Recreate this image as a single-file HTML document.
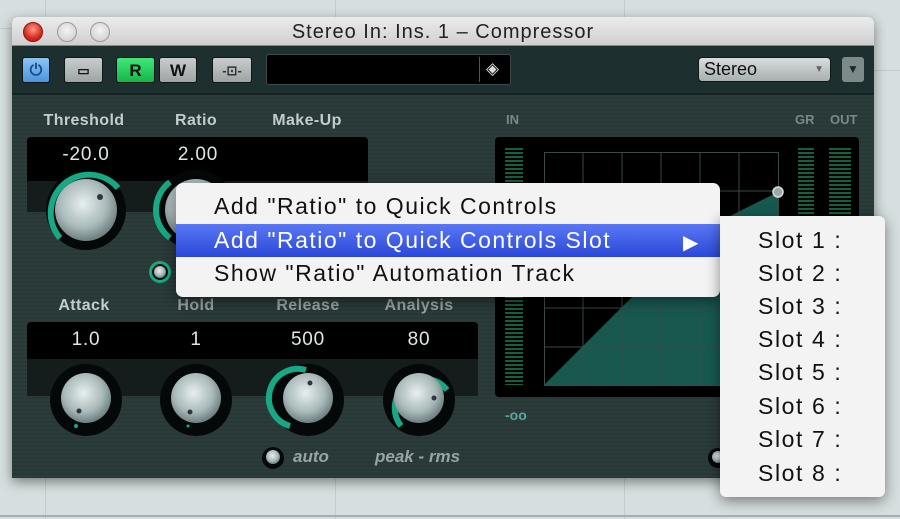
<!DOCTYPE html>
<html><head><meta charset="utf-8"><style>
*{margin:0;padding:0;box-sizing:border-box}
body{width:900px;height:519px;overflow:hidden;position:relative;background:#d6dfdf;font-family:"Liberation Sans",sans-serif}
.a{position:absolute}
.gl{position:absolute;background:#c3cccc}
.win{left:12px;top:17px;width:862px;height:461px;background:#263534;box-shadow:0 4px 12px rgba(0,0,0,.45);border-radius:5px 5px 0 0;overflow:hidden}
.title{left:0;top:0;width:862px;height:29px;background:linear-gradient(#ececec,#cfcfcf);border-bottom:1px solid #888;text-align:center;font-size:20px;letter-spacing:1px;line-height:31px;color:#222}
.tl{width:20px;height:20px;border-radius:50%;top:5px;background:radial-gradient(circle at 50% 40%,#f4f4f4,#c8c8c8);border:1px solid #9a9a9a}
.tb{left:0;top:29px;width:862px;height:49px;background:#1d302f;border-bottom:2px solid #142221}
.btn{height:26px;top:11px;border-radius:3px;background:linear-gradient(#c8cccc,#9ea4a4);border:1px solid #0d1818;text-align:center;font-weight:bold;font-size:17px;line-height:25px;color:#111}
.body{left:0;top:78px;width:862px;height:383px;background:repeating-linear-gradient(#2c3c3b 0 2px,#283837 2px 4px)}
.lab{font-weight:bold;font-size:16px;letter-spacing:.4px;color:#c4cccc;transform:translateX(-50%);top:0}
.val{font-size:19px;letter-spacing:.8px;transform:translateX(-50%);color:#dfe6e6}
.mi{position:absolute;left:38px;font-size:23px;letter-spacing:1.5px;color:#111;white-space:nowrap}
.si{position:absolute;left:38px;font-size:23px;letter-spacing:1.6px;color:#111;white-space:nowrap}
</style></head><body>
<div class="gl" style="left:45px;top:0;width:1px;height:519px"></div>
<div class="gl" style="left:335px;top:0;width:1px;height:519px"></div>
<div class="gl" style="left:624px;top:0;width:1px;height:519px"></div>
<div class="gl" style="left:0;top:28px;width:12px;height:1px"></div>
<div class="gl" style="left:874px;top:70px;width:26px;height:1px"></div>
<div class="gl" style="left:0;top:515px;width:900px;height:2px;background:#aab"></div>

<div class="a win">
 <div class="a title">Stereo In: Ins. 1 – Compressor</div>
 <div class="a tl" style="left:11px;background:radial-gradient(circle at 50% 35%,#ff9a8a,#d8281c 60%,#a01810);border-color:#8a1a12"></div>
 <div class="a tl" style="left:45px"></div>
 <div class="a tl" style="left:78px"></div>
 <div class="a tb">
  <div class="a btn" style="left:10px;width:28px;background:linear-gradient(#8cc4f4,#4e94dc);color:#1a4a8a;font-size:16px">⏻</div>
  <div class="a btn" style="left:52px;width:39px;font-size:13px">▭</div>
  <div class="a btn" style="left:104px;width:39px;background:linear-gradient(#3ee878,#18b448)">R</div>
  <div class="a btn" style="left:147px;width:38px">W</div>
  <div class="a btn" style="left:200px;width:40px;font-size:13px;color:#333">-⊡-</div>
  <div class="a" style="left:254px;top:8px;width:245px;height:31px;background:#000;border-radius:3px;border:1px solid #3a4a4a"></div>
  <div class="a" style="left:467px;top:11px;width:1px;height:25px;background:#555"></div>
  <div class="a" style="left:474px;top:13px;color:#ddd;font-size:17px">◈</div>
  <div class="a" style="left:686px;top:11px;width:133px;height:25px;border-radius:4px;background:linear-gradient(#d8dcdc,#a8b0b0);border:1px solid #0d1818;font-size:18px;line-height:23px;padding-left:5px;color:#111">Stereo<span style="position:absolute;right:6px;top:0;font-size:10px;color:#666">▼</span></div>
  <div class="a" style="left:830px;top:11px;width:22px;height:25px;border-radius:3px;background:#7d8a8a;color:#1a2a2a;font-size:12px;text-align:center;line-height:25px">▼</div>
 </div>
 <div class="a body">
  <div class="a" style="left:0;top:0;width:862px;height:383px">
   <div class="a lab" style="left:72px;top:17px">Threshold</div>
   <div class="a lab" style="left:184px;top:17px">Ratio</div>
   <div class="a lab" style="left:295px;top:17px">Make-Up</div>
   <div class="a" style="left:15px;top:42px;width:341px;height:75px;background:#000;border-radius:4px"></div>
   <div class="a" style="left:15px;top:86px;width:341px;height:31px;background:#151c1c"></div>
   <div class="a val" style="left:74px;top:49px">-20.0</div>
   <div class="a val" style="left:186px;top:49px">2.00</div>
   <div class="a lab" style="left:72px;top:202px">Attack</div>
   <div class="a lab" style="left:184px;top:202px;color:#9aa4a4">Hold</div>
   <div class="a lab" style="left:296px;top:202px;color:#9aa4a4">Release</div>
   <div class="a lab" style="left:407px;top:202px;color:#9aa4a4">Analysis</div>
   <div class="a" style="left:15px;top:227px;width:451px;height:74px;background:#000;border-radius:4px"></div>
   <div class="a" style="left:15px;top:264px;width:451px;height:37px;background:#151c1c"></div>
   <div class="a val" style="left:74px;top:234px">1.0</div>
   <div class="a val" style="left:184px;top:234px">1</div>
   <div class="a val" style="left:296px;top:234px">500</div>
   <div class="a val" style="left:407px;top:234px">80</div>
   <div class="a" style="left:281px;top:352px;font-size:17px;font-weight:bold;font-style:italic;color:#9aa4a4">auto</div>
   <div class="a" style="left:363px;top:352px;font-size:17px;font-weight:bold;font-style:italic;color:#9aa4a4">peak - rms</div>
   <div class="a" style="left:494px;top:17px;font-size:13px;font-weight:bold;color:#7a8888">IN</div>
   <div class="a" style="left:783px;top:17px;font-size:13px;font-weight:bold;color:#7a8888">GR</div>
   <div class="a" style="left:818px;top:17px;font-size:13px;font-weight:bold;color:#7a8888">OUT</div>
   <div class="a" style="left:493px;top:312px;font-size:14px;font-weight:bold;color:#5aa8a0">-oo</div>
  </div>
 </div>
</div>

<svg class="a" style="left:0;top:0" width="900" height="519">
 <defs>
  <radialGradient id="m" cx="45%" cy="40%" r="65%"><stop offset="0" stop-color="#e8efef"/><stop offset=".6" stop-color="#a8b8b8"/><stop offset="1" stop-color="#5e7070"/></radialGradient>
  <pattern id="met" width="18" height="4" patternUnits="userSpaceOnUse"><rect width="18" height="2" fill="#17603f"/></pattern>
 </defs>
 <rect x="495" y="137" width="364" height="260" rx="4" fill="#000"/>
 <rect x="505" y="147" width="18" height="238" fill="url(#met)"/>
 <rect x="798" y="147" width="16" height="100" fill="url(#met)"/>
 <rect x="829" y="147" width="22" height="100" fill="url(#met)"/>
 <polygon points="544,385 696,233 778,192 778,385" fill="#17594f"/>
 <g stroke="#3a4a48" stroke-width="1" fill="none">
  <rect x="544.5" y="152.5" width="234" height="233"/>
  <path d="M583 152V385M622 152V385M661 152V385M700 152V385M739 152V385M544 191H778M544 230H778M544 269H778M544 308H778M544 347H778"/>
 </g>
 <circle cx="778" cy="192" r="5" fill="#9aa" stroke="#ddd" stroke-width="1.5"/>
 <g>
  <circle cx="86" cy="210" r="40" fill="#050808"/>
  <path d="M60 238 A35 35 0 1 1 118 188" stroke="#17a886" stroke-width="6" fill="none"/>
  <circle cx="86" cy="210" r="31" fill="url(#m)"/>
  <circle cx="100" cy="197" r="3" fill="#334"/>
 </g>
 <g>
  <circle cx="196" cy="210" r="40" fill="#050808"/>
  <path d="M170 238 A35 35 0 0 1 170 182" stroke="#17a886" stroke-width="6" fill="none"/>
  <circle cx="196" cy="210" r="31" fill="url(#m)"/>
 </g>
 <circle cx="160" cy="272" r="11" fill="#17a886"/><circle cx="160" cy="272" r="8" fill="#0a1010"/><circle cx="160" cy="272" r="6" fill="url(#m)"/>
 <g>
  <circle cx="86" cy="400" r="36" fill="#050808"/>
  <circle cx="86" cy="398" r="25" fill="url(#m)"/>
  <circle cx="79" cy="411" r="2.5" fill="#334"/><circle cx="76" cy="426" r="2" fill="#17a886"/>
 </g>
 <g>
  <circle cx="196" cy="400" r="36" fill="#050808"/>
  <circle cx="196" cy="398" r="25" fill="url(#m)"/>
  <circle cx="190" cy="412" r="2.5" fill="#334"/><circle cx="188" cy="426" r="1.5" fill="#17a886"/>
 </g>
 <g>
  <circle cx="308" cy="400" r="36" fill="#050808"/>
  <path d="M290 426 A29 29 0 0 1 306 370" stroke="#17a886" stroke-width="6" fill="none"/>
  <circle cx="308" cy="398" r="25" fill="url(#m)"/>
  <circle cx="310" cy="383" r="2.5" fill="#334"/>
 </g>
 <g>
  <circle cx="419" cy="400" r="36" fill="#050808"/>
  <path d="M401 426 A29 29 0 1 1 447 390" stroke="#17a886" stroke-width="6" fill="none"/>
  <circle cx="419" cy="398" r="25" fill="url(#m)"/>
  <circle cx="434" cy="398" r="2.5" fill="#334"/>
 </g>
 <circle cx="273" cy="458" r="11" fill="#050808"/><circle cx="273" cy="457" r="7" fill="url(#m)"/>
 <circle cx="718" cy="458" r="10" fill="#050808"/><circle cx="718" cy="457" r="6" fill="url(#m)"/>
</svg>

<div class="a" style="left:176px;top:183px;width:544px;height:114px;background:#f3f3f3;border-radius:7px;box-shadow:0 4px 14px rgba(0,0,0,.45)">
 <div class="mi" style="top:10px">Add "Ratio" to Quick Controls</div>
 <div class="a" style="left:0;top:41px;width:544px;height:33px;background:linear-gradient(#5a78f4,#2a48d8)"></div>
 <div class="mi" style="top:44px;color:#fff">Add "Ratio" to Quick Controls Slot</div>
 <div class="a" style="left:507px;top:47px;color:#fff;font-size:20px">▶</div>
 <div class="mi" style="top:77px">Show "Ratio" Automation Track</div>
</div>
<div class="a" style="left:720px;top:216px;width:165px;height:281px;background:#f3f3f3;border-radius:0 6px 6px 6px;box-shadow:0 4px 14px rgba(0,0,0,.45)">
 <div class="si" style="top:11px">Slot 1 :</div>
 <div class="si" style="top:44px">Slot 2 :</div>
 <div class="si" style="top:77px">Slot 3 :</div>
 <div class="si" style="top:110px">Slot 4 :</div>
 <div class="si" style="top:143px">Slot 5 :</div>
 <div class="si" style="top:177px">Slot 6 :</div>
 <div class="si" style="top:210px">Slot 7 :</div>
 <div class="si" style="top:244px">Slot 8 :</div>
</div>
</body></html>
